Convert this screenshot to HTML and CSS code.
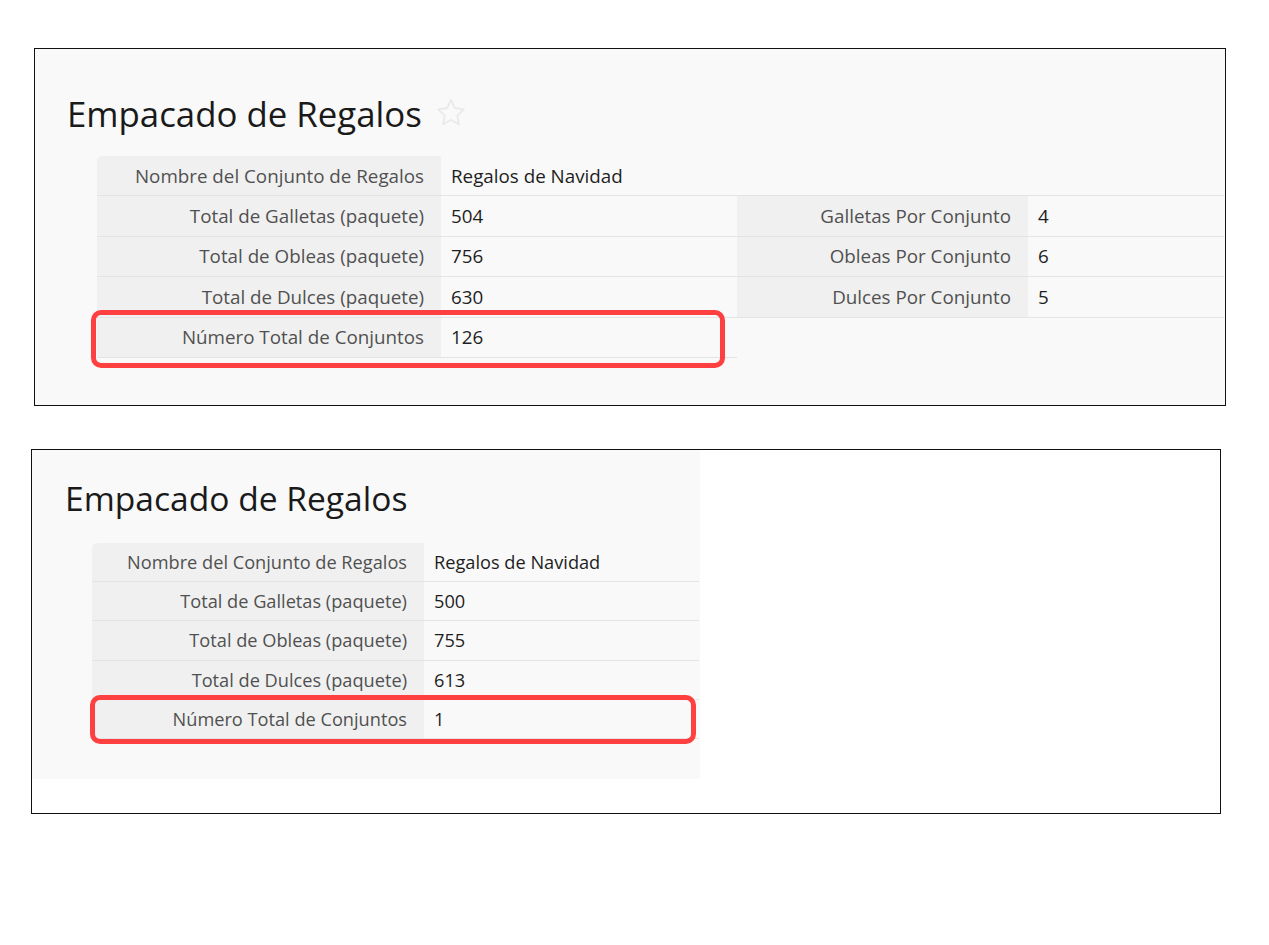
FILE: index.html
```html
<!DOCTYPE html>
<html lang="es">
<head>
    <meta charset="UTF-8">
    <meta name="viewport" content="width=device-width, initial-scale=1.0">
    <title>Empacado de Regalos</title>
    <link rel="stylesheet" href="styles.css">
</head>
<body>
    <!-- Form with per-set quantities -->
    <div class="shot shot-top">
        <div class="sheet">
            <h1 class="title">Empacado de Regalos
                <svg class="star" viewBox="0 0 24 24" width="32" height="32">
                    <path d="M12 2.2l2.9 6.2 6.8.8-5 4.6 1.3 6.7L12 17.2l-6 3.3 1.3-6.7-5-4.6 6.8-.8z" fill="none" stroke="#e9e9e9" stroke-width="1.3" stroke-linejoin="round"/>
                </svg>
            </h1>
            <div class="table-wrap">
                <table class="fields">
                    <tr>
                        <th class="c1">Nombre del Conjunto de Regalos</th>
                        <td colspan="3">Regalos de Navidad</td>
                    </tr>
                    <tr>
                        <th>Total de Galletas (paquete)</th>
                        <td class="c2">504</td>
                        <th class="c3">Galletas Por Conjunto</th>
                        <td>4</td>
                    </tr>
                    <tr>
                        <th>Total de Obleas (paquete)</th>
                        <td>756</td>
                        <th>Obleas Por Conjunto</th>
                        <td>6</td>
                    </tr>
                    <tr>
                        <th>Total de Dulces (paquete)</th>
                        <td>630</td>
                        <th>Dulces Por Conjunto</th>
                        <td>5</td>
                    </tr>
                    <tr>
                        <th>Número Total de Conjuntos</th>
                        <td>126</td>
                    </tr>
                </table>
                <div class="mark"></div>
            </div>
        </div>
    </div>

    <!-- Same form before the fix -->
    <div class="shot shot-bottom">
        <div class="sheet">
            <h1 class="title">Empacado de Regalos</h1>
            <div class="table-wrap">
                <table class="fields">
                    <tr>
                        <th class="c1">Nombre del Conjunto de Regalos</th>
                        <td>Regalos de Navidad</td>
                    </tr>
                    <tr>
                        <th>Total de Galletas (paquete)</th>
                        <td>500</td>
                    </tr>
                    <tr>
                        <th>Total de Obleas (paquete)</th>
                        <td>755</td>
                    </tr>
                    <tr>
                        <th>Total de Dulces (paquete)</th>
                        <td>613</td>
                    </tr>
                    <tr>
                        <th>Número Total de Conjuntos</th>
                        <td>1</td>
                    </tr>
                </table>
                <div class="mark"></div>
            </div>
        </div>
    </div>
</body>
</html>
```
FILE: styles.css
```css
* {
    margin: 0;
    padding: 0;
    box-sizing: border-box;
}

body {
    font-family: 'Open Sans', 'Liberation Sans', sans-serif;
    background: #ffffff;
    color: #222222;
}

.shot {
    border: 1px solid #111111;
    background: #ffffff;
}

.shot-top {
    margin: 48px 0 0 34px;
    width: 1192px;
    height: 358px;
}

.shot-bottom {
    margin: 43px 0 0 31px;
    width: 1190px;
    height: 365px;
}

.sheet {
    background: #f9f9f9;
}

.shot-top .sheet {
    height: 100%;
    padding: 45px 0 0 32px;
}

.shot-bottom .sheet {
    width: 668px;
    height: 329px;
    padding: 28px 0 0 33px;
}

.title {
    font-weight: normal;
    font-size: 34.8px;
    line-height: 40px;
    color: #1a1a1a;
    display: flex;
    align-items: center;
    gap: 13px;
}

.shot-bottom .title {
    font-size: 33.6px;
}

.star {
    margin-top: -2px;
}

.table-wrap {
    position: relative;
    margin: 22px 0 0 30px;
}

.shot-bottom .table-wrap {
    margin: 25px 0 0 27px;
}

.fields {
    border-collapse: separate;
    border-spacing: 0;
    font-size: 18.8px;
}

.shot-bottom .fields {
    font-size: 18.2px;
}

.fields th,
.fields td {
    height: 40.4px;
    border-bottom: 1px solid #e4e4e4;
    white-space: nowrap;
    vertical-align: middle;
}

.shot-bottom .fields th,
.shot-bottom .fields td {
    height: 39.2px;
}

.fields th {
    font-weight: normal;
    text-align: right;
    color: #505050;
    background: #f0f0f0;
    padding-right: 17px;
}

.fields td {
    text-align: left;
    color: #1e1e1e;
    padding-left: 10px;
}

.fields tr:first-child th {
    border-top-left-radius: 5px;
}

.shot-top .c1 { width: 344px; }
.shot-top .c2 { width: 296px; }
.shot-top .c3 { width: 291px; }
.shot-top .fields { width: 1127px; }

.shot-bottom .c1 { width: 332px; }
.shot-bottom .fields { width: 607px; }

.mark {
    position: absolute;
    border: 5px solid #ff4040;
    border-radius: 10px;
}

.shot-top .mark {
    left: -6px;
    bottom: -10px;
    width: 634px;
    height: 58px;
}

.shot-bottom .mark {
    left: -2px;
    bottom: -5px;
    width: 606px;
    height: 49px;
}
```
